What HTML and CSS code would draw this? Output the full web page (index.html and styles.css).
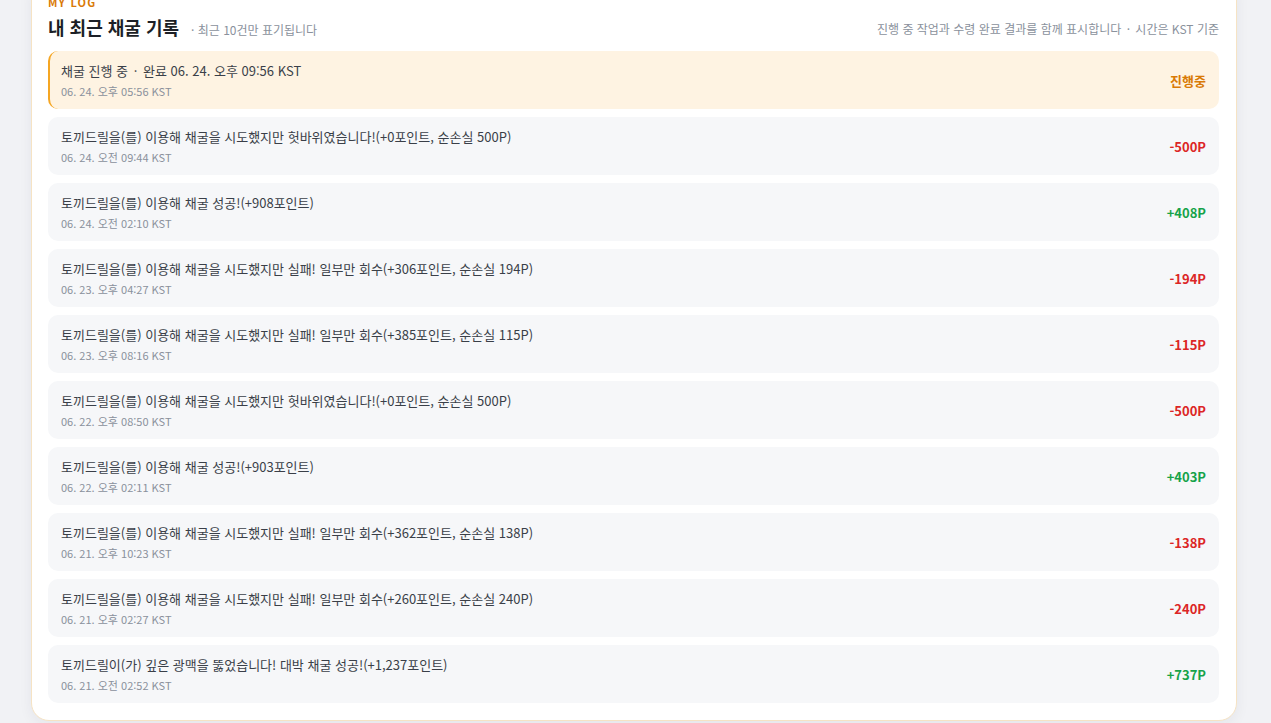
FILE: index.html
```html
<!DOCTYPE html>
<html lang="ko">
<head>
  <meta charset="UTF-8" />
  <meta name="viewport" content="width=device-width, initial-scale=1.0"/>
  <title>내 최근 채굴 기록</title>
  <link rel="stylesheet" href="styles.css">
</head>
<body>
  <div class="page">
    <section class="log-card">
      <div class="eyebrow">MY LOG</div>
      <div class="log-head">
        <div class="log-title">
          <h2>내 최근 채굴 기록</h2>
          <span class="log-note">· 최근 10건만 표기됩니다</span>
        </div>
        <span class="log-hint">진행 중 작업과 수령 완료 결과를 함께 표시합니다 <span class="sep">·</span> 시간은 KST 기준</span>
      </div>

      <ul class="log-list">
        <li class="log-item pending">
          <div class="log-text">
            <p class="log-msg">채굴 진행 중 <span class="sep">·</span> 완료 06. 24. 오후 09:56 KST</p>
            <p class="log-time">06. 24. 오후 05:56 KST</p>
          </div>
          <span class="log-amount wait">진행중</span>
        </li>
        <li class="log-item">
          <div class="log-text">
            <p class="log-msg">토끼드릴을(를) 이용해 채굴을 시도했지만 헛바위였습니다!(+0포인트, 순손실 500P)</p>
            <p class="log-time">06. 24. 오전 09:44 KST</p>
          </div>
          <span class="log-amount minus">-500P</span>
        </li>
        <li class="log-item">
          <div class="log-text">
            <p class="log-msg">토끼드릴을(를) 이용해 채굴 성공!(+908포인트)</p>
            <p class="log-time">06. 24. 오전 02:10 KST</p>
          </div>
          <span class="log-amount plus">+408P</span>
        </li>
        <li class="log-item">
          <div class="log-text">
            <p class="log-msg">토끼드릴을(를) 이용해 채굴을 시도했지만 실패! 일부만 회수(+306포인트, 순손실 194P)</p>
            <p class="log-time">06. 23. 오후 04:27 KST</p>
          </div>
          <span class="log-amount minus">-194P</span>
        </li>
        <li class="log-item">
          <div class="log-text">
            <p class="log-msg">토끼드릴을(를) 이용해 채굴을 시도했지만 실패! 일부만 회수(+385포인트, 순손실 115P)</p>
            <p class="log-time">06. 23. 오후 08:16 KST</p>
          </div>
          <span class="log-amount minus">-115P</span>
        </li>
        <li class="log-item">
          <div class="log-text">
            <p class="log-msg">토끼드릴을(를) 이용해 채굴을 시도했지만 헛바위였습니다!(+0포인트, 순손실 500P)</p>
            <p class="log-time">06. 22. 오후 08:50 KST</p>
          </div>
          <span class="log-amount minus">-500P</span>
        </li>
        <li class="log-item">
          <div class="log-text">
            <p class="log-msg">토끼드릴을(를) 이용해 채굴 성공!(+903포인트)</p>
            <p class="log-time">06. 22. 오후 02:11 KST</p>
          </div>
          <span class="log-amount plus">+403P</span>
        </li>
        <li class="log-item">
          <div class="log-text">
            <p class="log-msg">토끼드릴을(를) 이용해 채굴을 시도했지만 실패! 일부만 회수(+362포인트, 순손실 138P)</p>
            <p class="log-time">06. 21. 오후 10:23 KST</p>
          </div>
          <span class="log-amount minus">-138P</span>
        </li>
        <li class="log-item">
          <div class="log-text">
            <p class="log-msg">토끼드릴을(를) 이용해 채굴을 시도했지만 실패! 일부만 회수(+260포인트, 순손실 240P)</p>
            <p class="log-time">06. 21. 오후 02:27 KST</p>
          </div>
          <span class="log-amount minus">-240P</span>
        </li>
        <li class="log-item">
          <div class="log-text">
            <p class="log-msg">토끼드릴이(가) 깊은 광맥을 뚫었습니다! 대박 채굴 성공!(+1,237포인트)</p>
            <p class="log-time">06. 21. 오전 02:52 KST</p>
          </div>
          <span class="log-amount plus">+737P</span>
        </li>
      </ul>
    </section>
  </div>
</body>
</html>
```

FILE: styles.css
```css
:root {
  --page-bg: #f1f2f5;
  --card-bg: #ffffff;
  --card-border: #f6e3c4;
  --row-bg: #f6f7f9;
  --pending-bg: #fef3e2;
  --pending-line: #f5a623;
  --text-main: #1c1f26;
  --text-body: #3a3f48;
  --text-muted: #8a919c;
  --accent: #d97a06;
  --minus: #dc2626;
  --plus: #16a34a;
}

* {
  box-sizing: border-box;
}

body {
  margin: 0;
  background: var(--page-bg);
  font-family: "Noto Sans CJK KR", "Noto Sans", sans-serif;
  color: var(--text-body);
  overflow: hidden;
}

.page {
  width: 1206px;
  margin: -22px 0 0 31px;
  padding-bottom: 24px;
}

.log-card {
  background: var(--card-bg);
  border: 1px solid var(--card-border);
  border-radius: 18px;
  padding: 16px 17px 17px 16px;
  box-shadow: 0 4px 14px rgba(30, 40, 60, 0.06);
}

.eyebrow {
  font-size: 11px;
  font-weight: 700;
  line-height: 14px;
  letter-spacing: 1.2px;
  color: var(--accent);
}

.log-head {
  display: flex;
  align-items: flex-end;
  justify-content: space-between;
  margin: 5px 0 11px;
}

.log-title {
  display: flex;
  align-items: baseline;
  gap: 12px;
}

.log-title h2 {
  margin: 0;
  font-size: 18px;
  font-weight: 700;
  line-height: 26px;
  color: var(--text-main);
}

.log-note,
.log-hint {
  font-size: 12px;
  color: var(--text-muted);
}

.log-hint {
  line-height: 22px;
}

/* middle dot separators sit a little wider apart */
.sep {
  margin: 0 2px;
}

.log-list {
  list-style: none;
  margin: 0;
  padding: 0;
  display: flex;
  flex-direction: column;
  gap: 8px;
}

.log-item {
  display: flex;
  align-items: center;
  justify-content: space-between;
  background: var(--row-bg);
  border-radius: 10px;
  padding: 10px 13px 10px 13px;
}

.log-item.pending {
  background: var(--pending-bg);
  border-left: 2px solid var(--pending-line);
  padding-left: 11px;
}

.log-msg {
  margin: 0;
  font-size: 13px;
  line-height: 20px;
  color: var(--text-body);
}

.log-time {
  margin: 2px 0 0;
  font-size: 11px;
  line-height: 16px;
  color: var(--text-muted);
}

.log-amount {
  font-size: 13px;
  font-weight: 700;
}

.log-amount.wait { color: var(--accent); }
.log-amount.minus { color: var(--minus); }
.log-amount.plus { color: var(--plus); }
```
